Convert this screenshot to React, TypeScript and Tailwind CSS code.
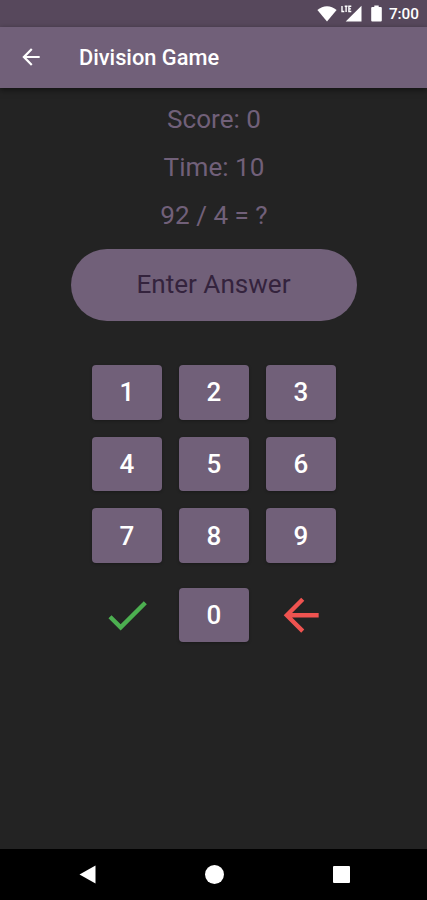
import type { ReactNode } from 'react';

const rows = [
  ['1', '2', '3'],
  ['4', '5', '6'],
  ['7', '8', '9'],
];

function StatusBar() {
  return (
    <div className="flex h-[26.5px] shrink-0 items-center justify-end bg-[#57485c] pr-[8px] text-white">
      <svg className="h-[17px] w-[20px]" viewBox="0 0 20 17" fill="currentColor">
        <path d="M0.4 5C6-.1 14-.1 19.6 5L10 16.5z" />
      </svg>
      <svg className="ml-[4px] h-[17px] w-[21px]" viewBox="0 0 21 17" fill="currentColor">
        <path d="M20.5 0.7V16.5H4.7z" />
        <path d="M0 0H11V8H0z" fill="#57485c" />
        <path d="M1 1V6.5H3.3M3.7 1.3H6.5M5.1 1.3V7M10.3 1.3H7.9V6.5H10.3M7.9 3.9H10" fill="none" stroke="currentColor" strokeWidth="1.4" />
      </svg>
      <svg className="ml-[9px] h-[17px] w-[11px]" viewBox="0 0 11 17" fill="currentColor">
        <path d="M3.3 0.5H7.7V2H9.8Q10.8 2 10.8 3V15.5Q10.8 16.5 9.8 16.5H1.2Q.2 16.5 .2 15.5V3Q.2 2 1.2 2H3.3z" />
      </svg>
      <span className="ml-[7px] pt-[2px] text-[15.3px] leading-none font-medium">7:00</span>
    </div>
  );
}

function MaterialIcon({ path, className }: { path: string; className: string }) {
  return (
    <svg viewBox="0 0 24 24" fill="currentColor" className={className}>
      <path d={path} />
    </svg>
  );
}

const BACK = 'M20 11H7.83l5.59-5.59L12 4l-8 8 8 8 1.41-1.41L7.83 13H20v-2z';
const CHECK = 'M9 16.17L4.83 12l-1.42 1.41L9 19 21 7l-1.41-1.41z';

function Key({ children }: { children: ReactNode }) {
  return (
    <button className="flex h-[54.5px] w-[70px] items-center justify-center rounded-[4px] bg-[#716079] pl-px text-[26px] leading-none font-medium text-white shadow-[0_1px_3px_rgba(0,0,0,0.3)]">
      {children}
    </button>
  );
}

export default function App() {
  return (
    <div className="flex h-[900px] w-[427px] flex-col overflow-hidden bg-[#232323] font-['Roboto',sans-serif]">
      <StatusBar />
      <header className="flex h-[61px] shrink-0 items-center bg-[#716079] pl-[17.5px] text-white shadow-[0_2px_6px_rgba(0,0,0,0.5)]">
        <MaterialIcon path={BACK} className="size-[26px]" />
        <h1 className="ml-[35.5px] pt-[2px] text-[21.8px] leading-none font-medium">Division Game</h1>
      </header>

      <main className="flex flex-1 flex-col items-center pt-[7.5px]">
        <div className="pl-px text-center text-[26.1px] leading-[48px] text-[#716079]">
          <p>Score: 0</p>
          <p>Time: 10</p>
          <p>92 / 4 = ?</p>
        </div>

        <div className="mt-[9.5px] flex h-[72.5px] w-[286px] items-center justify-center rounded-full bg-[#716079] pb-[2px] text-[26.1px] leading-none text-[#34233d]">
          Enter Answer
        </div>

        <div className="mt-[44px] flex flex-col gap-[17.2px]">
          {rows.map((row) => (
            <div key={row[0]} className="flex gap-[17px]">
              {row.map((digit) => (
                <Key key={digit}>{digit}</Key>
              ))}
            </div>
          ))}
        </div>

        <div className="mt-[25px] flex gap-[17px]">
          <button className="flex w-[70px] items-center justify-center pl-px text-[#4caf50]">
            <MaterialIcon path={CHECK} className="size-[52.4px]" />
          </button>
          <Key>0</Key>
          <button className="flex w-[70px] items-center justify-center pl-[2px] text-[#ef5350]">
            <MaterialIcon path={BACK} className="size-[52.4px]" />
          </button>
        </div>
      </main>

      <nav className="flex h-[51.5px] shrink-0 items-center justify-between bg-black pr-[77.5px] pl-[79px] text-white">
        <svg className="h-[19px] w-[17px]" viewBox="0 0 17 19" fill="currentColor">
          <path d="M16.5 0.5V18.5L0.5 9.5z" />
        </svg>
        <span className="size-[18.5px] rounded-full bg-white" />
        <span className="size-[17px] rounded-[1px] bg-white" />
      </nav>
    </div>
  );
}
